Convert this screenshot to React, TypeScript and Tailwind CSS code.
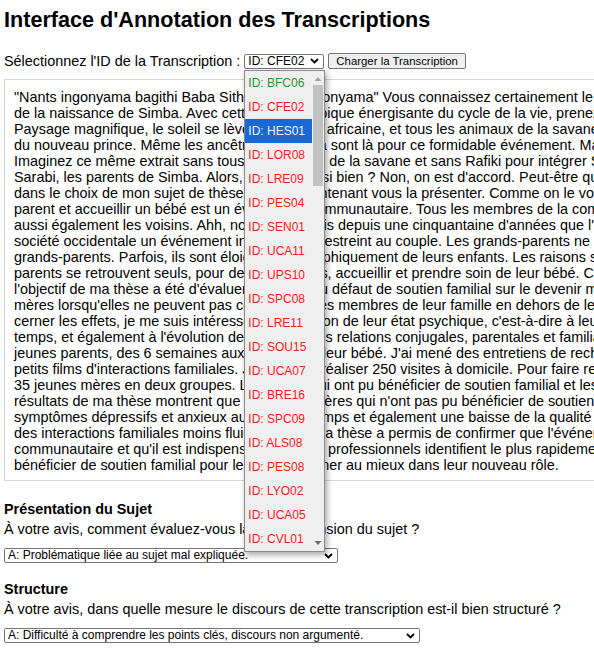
import React, { useState } from 'react';

const transcriptLines = [
    '"Nants ingonyama bagithi Baba Sithi uhhmm ingonyama" Vous connaissez certainement le début du Roi Lion, la scène',
    'de la naissance de Simba. Avec cette mélodie épique énergisante du cycle de la vie, prenez place devant la savane.',
    'Paysage magnifique, le soleil se lève sur la terre africaine, et tous les animaux de la savane viennent célébrer l\'arrivée',
    'du nouveau prince. Même les ancêtres de Simba sont là pour ce formidable événement. Mais maintenant, faites un effort.',
    'Imaginez ce même extrait sans tous les animaux de la savane et sans Rafiki pour intégrer Simba, juste avec Mufasa et',
    'Sarabi, les parents de Simba. Alors, ça rend aussi bien ? Non, on est d\'accord. Peut-être que c\'est ce qui m\'a guidée',
    'dans le choix de mon sujet de thèse, je vais maintenant vous la présenter. Comme on le voit, dans la savane, devenir',
    'parent et accueillir un bébé est un événement communautaire. Tous les membres de la communauté y participent, et',
    'aussi également les voisins. Ahh, non, plus jamais depuis une cinquantaine d\'années que l\'événement est devenu dans la',
    'société occidentale un événement individuel, et restreint au couple. Les grands-parents ne sont pas toujours là, les',
    'grands-parents. Parfois, ils sont éloignés géographiquement de leurs enfants. Les raisons sont multiples et les jeunes',
    'parents se retrouvent seuls, pour devenir parents, accueillir et prendre soin de leur bébé. C\'est pourquoi',
    'l\'objectif de ma thèse a été d\'évaluer les effets du défaut de soutien familial sur le devenir maternel, chez ces jeunes',
    'mères lorsqu\'elles ne peuvent pas compter sur les membres de leur famille en dehors de leur conjoint. Et pour en',
    'cerner les effets, je me suis intéressée à l\'évolution de leur état psychique, c\'est-à-dire à leur humeur au fil du',
    'temps, et également à l\'évolution de la qualité des relations conjugales, parentales et familiales au sein de ces',
    'jeunes parents, des 6 semaines aux 18 mois de leur bébé. J\'ai mené des entretiens de recherche et j\'ai filmé des',
    'petits films d\'interactions familiales. J\'ai ainsi pu réaliser 250 visites à domicile. Pour faire ressortir cela, j\'ai suivi',
    '35 jeunes mères en deux groupes. Les mères qui ont pu bénéficier de soutien familial et les autres. Et les',
    'résultats de ma thèse montrent que seules les mères qui n\'ont pas pu bénéficier de soutien familial voient leurs',
    'symptômes dépressifs et anxieux au cours du temps et également une baisse de la qualité de leur couple et',
    'des interactions familiales moins fluides. Ainsi, ma thèse a permis de confirmer que l\'événement de la naissance est',
    'communautaire et qu\'il est indispensable que les professionnels identifient le plus rapidement les mères qui ne peuvent',
    'bénéficier de soutien familial pour les accompagner au mieux dans leur nouveau rôle.',
];

const transcriptionIds = [
    { id: 'BFC06', done: true },
    { id: 'CFE02', done: false },
    { id: 'HES01', done: false },
    { id: 'LOR08', done: false },
    { id: 'LRE09', done: false },
    { id: 'PES04', done: false },
    { id: 'SEN01', done: false },
    { id: 'UCA11', done: false },
    { id: 'UPS10', done: false },
    { id: 'SPC08', done: false },
    { id: 'LRE11', done: false },
    { id: 'SOU15', done: false },
    { id: 'UCA07', done: false },
    { id: 'BRE16', done: false },
    { id: 'SPC09', done: false },
    { id: 'ALS08', done: false },
    { id: 'PES08', done: false },
    { id: 'LYO02', done: false },
    { id: 'UCA05', done: false },
    { id: 'CVL01', done: false },
];

const questions = [
    {
        title: 'Présentation du Sujet',
        question: 'À votre avis, comment évaluez-vous la compréhension du sujet ?',
        answer: 'A: Problématique liée au sujet mal expliquée.',
        width: 'w-[334px]',
    },
    {
        title: 'Structure',
        question: 'À votre avis, dans quelle mesure le discours de cette transcription est-il bien structuré ?',
        answer: 'A: Difficulté à comprendre les points clés, discours non argumenté.',
        width: 'w-[416px]',
    },
    {
        title: 'Argumentation',
        question: 'À votre avis, les arguments présentés sont-ils convaincants ?',
        answer: 'A: Arguments peu développés.',
        width: 'w-[300px]',
    },
];

const Chevron = () => (
    <svg width="9" height="6" viewBox="0 0 9 6" className="shrink-0">
        <path d="M1 1 L4.5 4.5 L8 1" fill="none" stroke="#000" strokeWidth="1.8" />
    </svg>
);

const FakeSelect = ({ value, className }: { value: string, className: string }) => (
    <div className={`flex h-[15px] items-center justify-between rounded-[2px] border border-[#767676] bg-white pl-[3px] pr-[4px] text-[12px] leading-[13px] ${className}`}>
        <span className="whitespace-nowrap">{value}</span>
        <Chevron />
    </div>
);

const DropdownList = ({ selected }: { selected: string }) => (
    <div className="absolute left-0 top-[16px] z-10 flex h-[482px] w-[81px] border border-[#8a8a8a] bg-[#efefef] shadow-[2px_3px_6px_rgba(0,0,0,0.35)]">
        <ul className="flex-1">
            {transcriptionIds.map(t => (
                <li
                    key={t.id}
                    className={`flex h-[24px] items-center pl-[3px] text-[12px] ${t.id === selected ? 'bg-[#1a68d4] text-[#eef4ff]' : t.done ? 'text-[#1f9a24]' : 'text-[#ff1a1a]'}`}
                >
                    ID: {t.id}
                </li>
            ))}
        </ul>
        {/* scrollbar */}
        <div className="flex w-[12px] flex-col items-center">
            <svg width="8" height="14" viewBox="0 0 8 14">
                <path d="M0.5 10 L4 6 L7.5 10 Z" fill="#a3a3a3" />
            </svg>
            <div className="h-[101px] w-[10px] bg-[#c1c1c1]" />
            <div className="flex-1" />
            <svg width="8" height="14" viewBox="0 0 8 14">
                <path d="M0.5 4 L4 8 L7.5 4 Z" fill="#6b6b6b" />
            </svg>
        </div>
    </div>
);

const App = () => {
    const [selectedId] = useState('HES01');

    return (
        <div className="h-screen overflow-hidden bg-white px-[4px] font-['Liberation_Sans',Arial,sans-serif] text-black">
            <h1 className="mt-[6px] text-[21.6px] font-bold leading-[28px]">Interface d'Annotation des Transcriptions</h1>

            <div className="mt-[19px] flex h-[16px] items-center text-[14.4px] leading-[16px]">
                <label className="whitespace-nowrap">Sélectionnez l'ID de la Transcription :</label>
                <div className="relative ml-[4px]">
                    <FakeSelect value="ID: CFE02" className="w-[80px]" />
                    <DropdownList selected={selectedId} />
                </div>
                <button className="ml-[4px] h-[16px] whitespace-nowrap rounded-[2px] border border-[#767676] bg-[#efefef] px-[7px] text-[11.4px] leading-[14px]">
                    Charger la Transcription
                </button>
            </div>

            <div className="mt-[10px] w-[900px] border border-[#d6d6d6] pb-[7px] pl-[9px] pt-[9px] text-[14.4px] leading-[16px]">
                {transcriptLines.map((line, i) => (
                    <div key={i} className="whitespace-nowrap">{line}</div>
                ))}
            </div>

            {questions.map((q, i) => (
                <section key={q.title} className={i === 0 ? 'mt-[20px]' : 'mt-[18px]'}>
                    <h3 className="text-[14.4px] font-bold leading-[16px]">{q.title}</h3>
                    <p className="mt-[4px] whitespace-nowrap text-[14.4px] leading-[16px]">{q.question}</p>
                    <FakeSelect value={q.answer} className={`mt-[11px] ${q.width}`} />
                </section>
            ))}
        </div>
    );
};

export default App;
